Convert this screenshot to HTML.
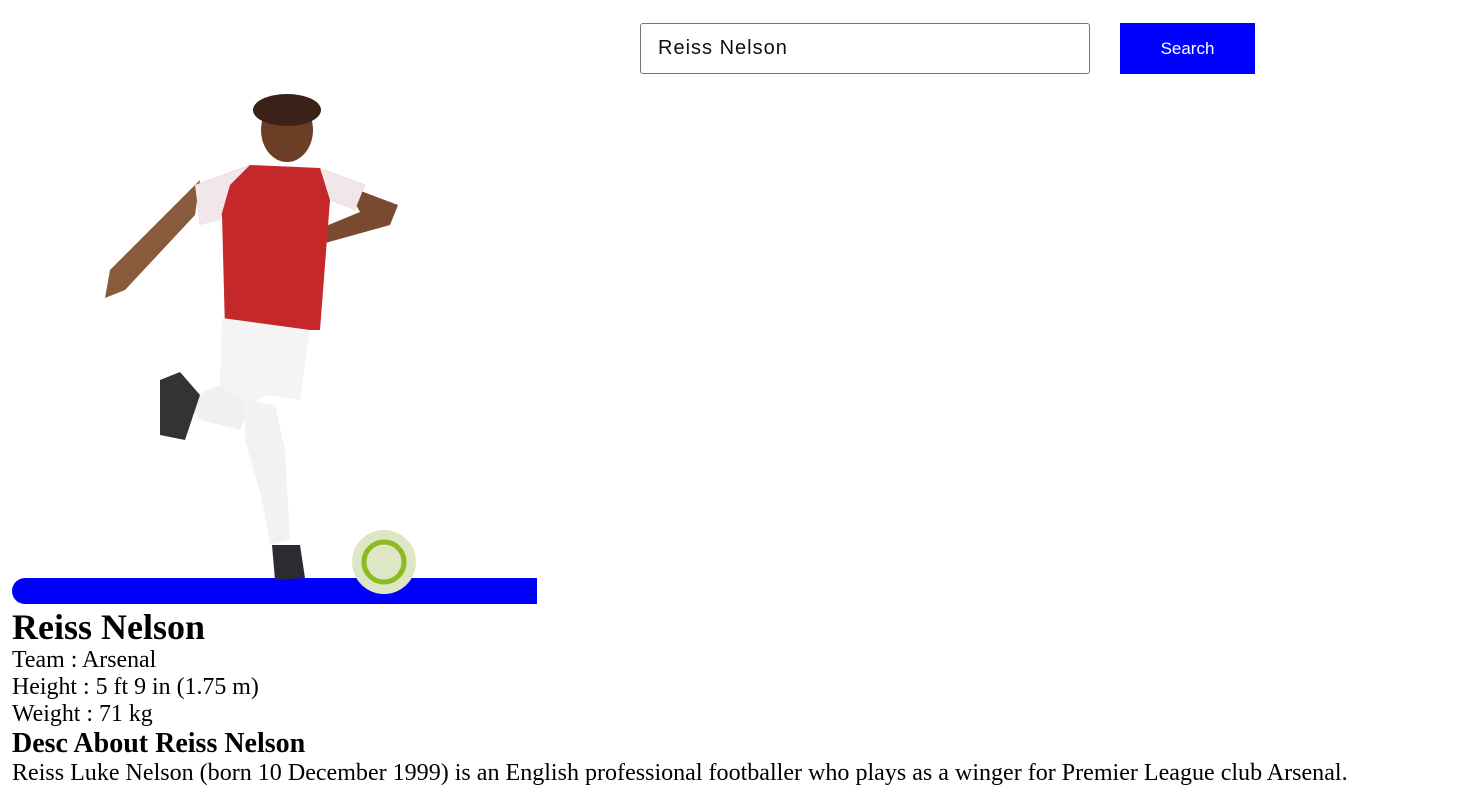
<!DOCTYPE html>
<html><head><meta charset="utf-8"><style>
body{margin:0;width:1481px;height:794px;background:#fff;font-family:"Liberation Serif",serif;position:relative;overflow:hidden}
.in{position:absolute;left:640px;top:23px;height:49px;border:1px solid #767676;border-radius:3px;font:20px "Liberation Sans",sans-serif;letter-spacing:1px;line-height:49px;padding-left:17px;width:431px;color:#111}
.btn{position:absolute;left:1120px;top:23px;width:135px;height:51px;background:#00f;color:#fff;font:17px "Liberation Sans",sans-serif;text-align:center;line-height:51px}
.bar{position:absolute;left:12px;top:578px;width:525px;height:26px;background:#00f;border-radius:13px 0 0 13px}
svg{position:absolute;left:0;top:0}
.t{position:absolute;left:12px;top:607px;color:#000}
h2{margin:0;font-size:36px;line-height:40px}
p{margin:0;font-size:23.9px;line-height:27px;white-space:nowrap}
h3{margin:0;font-size:28px;line-height:32px}
.last{font-size:24.05px}
</style></head><body>
<div class="in">Reiss Nelson</div>
<div class="btn">Search</div>
<div class="bar"></div>
<svg width="560" height="600">
<path d="M200 180 L110 270 L105 298 L125 290 L195 215Z" fill="#8a5a3c"/>
<path d="M345 185 L398 205 L390 225 L300 250 L292 240 L360 212Z" fill="#7a4a30"/>
<path d="M195 185 L250 165 L320 168 L365 185 L355 210 L330 200 L320 330 L225 330 L222 215 L200 225Z" fill="#c4282a"/>
<path d="M195 185 L250 165 L230 185 L220 220 L200 225Z M320 168 L365 185 L355 210 L330 200Z" fill="#f1e6ea"/>
<path d="M222 318 L310 330 L300 400 L265 395 L250 405 L220 385Z" fill="#f4f4f4"/>
<path d="M220 385 L250 405 L240 430 L200 420 L185 400Z" fill="#f0f0f0"/>
<path d="M160 380 L180 372 L200 395 L185 440 L160 435Z" fill="#333"/>
<path d="M245 400 L275 405 L285 450 L290 540 L270 545 L262 500 L245 440Z" fill="#f2f2f2"/>
<path d="M272 545 L300 545 L305 578 L275 580Z" fill="#2b2b33"/>
<ellipse cx="287" cy="130" rx="26" ry="32" fill="#6b3e26"/>
<ellipse cx="287" cy="110" rx="34" ry="16" fill="#3a2218"/>
<circle cx="384" cy="562" r="32" fill="#dfe6c4"/>
<circle cx="384" cy="562" r="20" fill="none" stroke="#8bbb22" stroke-width="5"/>
</svg>
<div class="t">
<h2>Reiss Nelson</h2>
<p>Team : Arsenal</p>
<p>Height : 5 ft 9 in (1.75 m)</p>
<p>Weight : 71 kg</p>
<h3>Desc About Reiss Nelson</h3>
<p class="last">Reiss Luke Nelson (born 10 December 1999) is an English professional footballer who plays as a winger for Premier League club Arsenal.</p>
</div>
</body></html>
